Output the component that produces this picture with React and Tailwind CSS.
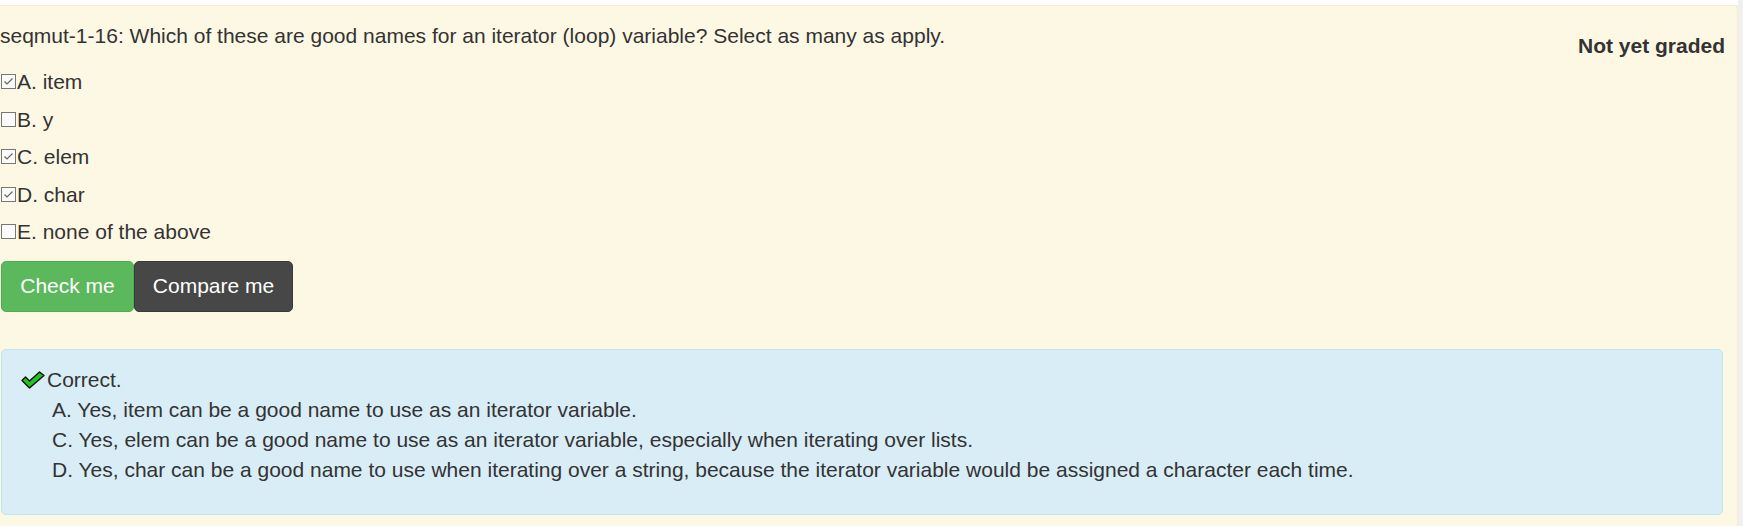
import React from "react";

function Box({ checked }) {
  return (
    <svg width="15" height="15" viewBox="0 0 15 15" className="shrink-0">
      <rect x="0.5" y="0.5" width="14" height="14" fill="#fbfbfb" stroke="#777777" />
      {checked && (
        <polyline points="3.5,7.5 6,10 11.5,4.5" fill="none" stroke="#666666" strokeWidth="1.2" />
      )}
    </svg>
  );
}

function GreenCheck() {
  return (
    <svg width="24" height="18" viewBox="0 0 24 18" className="shrink-0">
      <path
        d="M1 9.5 L4.5 6 L8.5 10 L18.5 1 L23 4.5 L8.5 17 Z"
        fill="#22c322"
        stroke="#111111"
        strokeWidth="1.4"
        strokeLinejoin="round"
      />
    </svg>
  );
}

const options = [
  ["A. item", true],
  ["B. y", false],
  ["C. elem", true],
  ["D. char", true],
  ["E. none of the above", false],
];

export default function App() {
  return (
    <div
      className="w-[1743px] h-[526px] overflow-hidden bg-[#f0f0f0] text-[#333333]"
      style={{ fontFamily: '"Liberation Sans", Arial, sans-serif' }}
    >
      <div className="h-[5px] bg-white w-[1738px]" />
      <div className="w-[1738px] h-[521px] bg-[#fdf8e4] border-t border-r border-[#faebcc] rounded-tr-[5px] pt-[16px]">
        <div className="flex justify-between items-start">
          <div className="text-[21px] leading-[28px]">
            seqmut-1-16: Which of these are good names for an iterator (loop) variable? Select as many as apply.
          </div>
          <div className="text-[21px] leading-[28px] font-bold mt-[10px] mr-[12px]">Not yet graded</div>
        </div>
        <div className="mt-[3px] flex flex-col">
          {options.map(([label, checked]) => (
            <div key={label} className="h-[37.5px] flex items-center text-[21px]">
              <span className="ml-[1px] mr-[1px] flex"><Box checked={checked} /></span>
              <span>{label}</span>
            </div>
          ))}
        </div>
        <div className="mt-[10px] flex">
          <button className="ml-[1px] h-[51px] w-[133px] bg-[#5cb85c] border border-[#4cae4c] rounded-[5px] text-white text-[21px]">
            Check me
          </button>
          <button className="h-[51px] w-[159px] bg-[#474747] border border-[#3a3a3a] rounded-[5px] text-white text-[21px]">
            Compare me
          </button>
        </div>
        <div className="mt-[37px] ml-[1px] w-[1722px] h-[166px] bg-[#d9edf7] border border-[#bce8f1] rounded-[5px] pt-[15px] pl-[19px] text-[21px] leading-[30px]">
          <div className="flex items-center">
            <GreenCheck />
            <span className="ml-[2px]">Correct.</span>
          </div>
          <div className="pl-[31px]">
            <div>A. Yes, item can be a good name to use as an iterator variable.</div>
            <div>C. Yes, elem can be a good name to use as an iterator variable, especially when iterating over lists.</div>
            <div>D. Yes, char can be a good name to use when iterating over a string, because the iterator variable would be assigned a character each time.</div>
          </div>
        </div>
      </div>
    </div>
  );
}
